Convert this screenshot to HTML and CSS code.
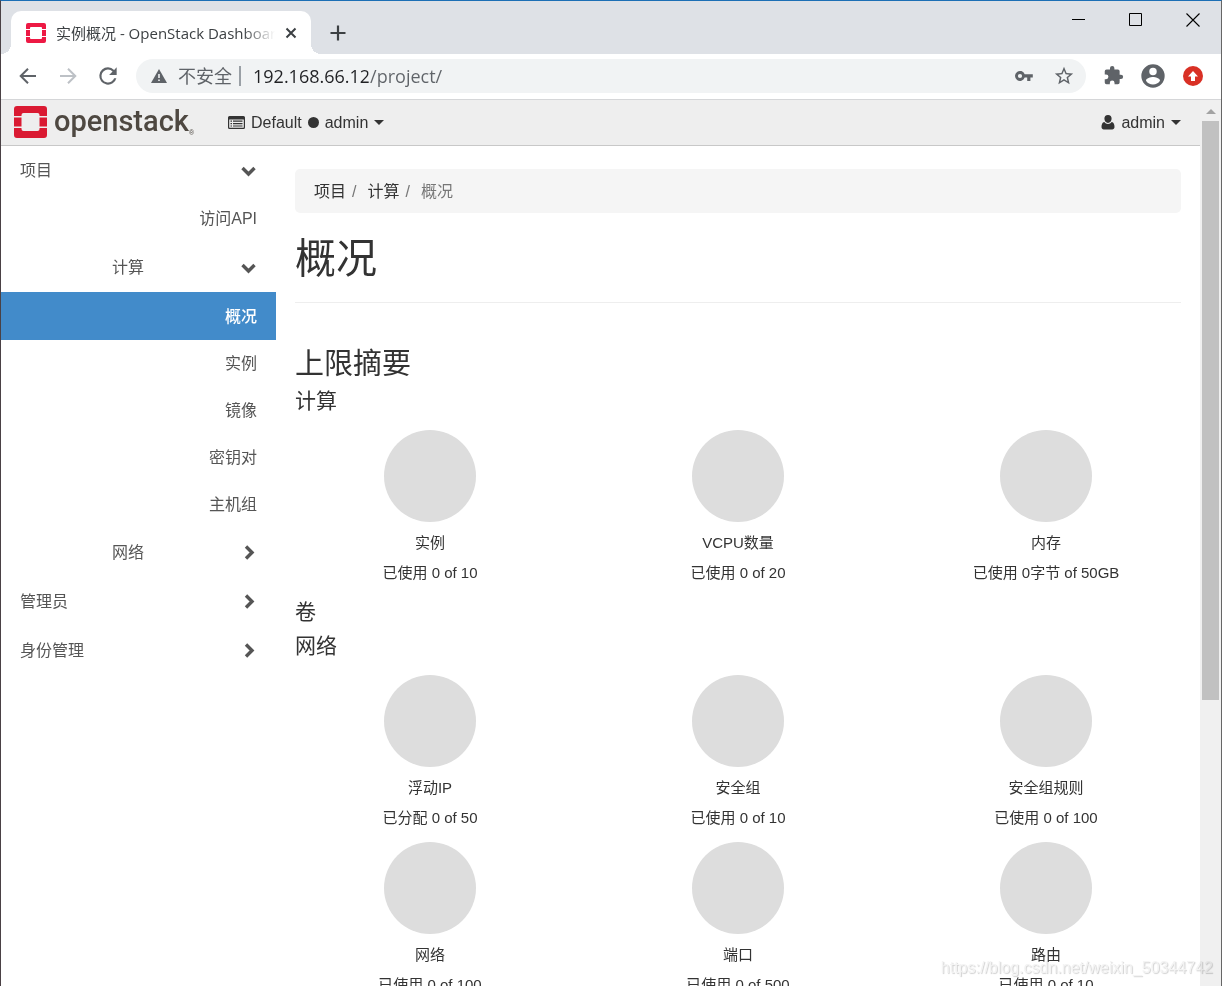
FILE: index.html
```html
<!DOCTYPE html>
<html lang="zh-CN">
<head>
<meta charset="utf-8">
<title>实例概况 - OpenStack Dashboard</title>
<link rel="stylesheet" href="styles.css">
</head>
<body>
<div class="window">
  <div class="tabstrip">
    <div class="tab">
      <svg class="favicon" viewBox="0 0 20 20" aria-hidden="true"><path fill="#ed1944" d="M2 0h16a2 2 0 0 1 2 2v4h-4V5a1 1 0 0 0-1-1H5a1 1 0 0 0-1 1v1H0V2a2 2 0 0 1 2-2zM0 7h4v6H0zM16 7h4v6h-4zM0 14h4v1a1 1 0 0 0 1 1h10a1 1 0 0 0 1-1v-1h4v4a2 2 0 0 1-2 2H2a2 2 0 0 1-2-2z"/></svg>
      <span class="tab-title">实例概况 - OpenStack Dashboard</span>
      <button class="icon-btn tab-close" aria-label="关闭标签页"><svg width="12" height="12" viewBox="0 0 12 12"><path d="M1.500 1.500l9 9M10.500 1.500l-9 9" stroke="#3c4043" stroke-width="2" fill="none"/></svg></button>
    </div>
    <button class="icon-btn new-tab" aria-label="新标签页"><svg width="16" height="16" viewBox="0 0 16 16"><path d="M8 .5v15M.5 8h15" stroke="#3c4043" stroke-width="2.200"/></svg></button>
    <div class="win-controls">
      <button class="icon-btn win-btn" aria-label="最小化"><svg width="14" height="14" viewBox="0 0 14 14"><path d="M0 6.500h13" stroke="#000"/></svg></button>
      <button class="icon-btn win-btn" aria-label="最大化"><svg width="14" height="14" viewBox="0 0 14 14"><path d="M.5 .5h12v12H.5z" stroke="#000" fill="none"/></svg></button>
      <button class="icon-btn win-btn" aria-label="关闭"><svg width="14" height="14" viewBox="0 0 14 14"><path d="M.5 .5l13 13M13.500 .5l-13 13" stroke="#000" stroke-width="1.100"/></svg></button>
    </div>
  </div>

  <div class="toolbar">
    <button class="icon-btn nav-btn" aria-label="后退"><svg width="24" height="24" viewBox="0 0 24 24"><path d="M20 12H5M12 4.700L4.700 12l7.300 7.300" stroke="#5f6368" stroke-width="2" fill="none"/></svg></button>
    <button class="icon-btn nav-btn" aria-label="前进"><svg width="24" height="24" viewBox="0 0 24 24"><path d="M4 12h15M12 4.700l7.300 7.300-7.300 7.300" stroke="#bdc1c6" stroke-width="2" fill="none"/></svg></button>
    <button class="icon-btn nav-btn" aria-label="重新加载"><svg width="26" height="26" viewBox="0 0 24 24"><path fill="#5f6368" d="M17.650 6.350A7.960 7.960 0 0 0 12 4a8 8 0 1 0 7.730 10h-2.080A6 6 0 1 1 12 6c1.660 0 3.140.69 4.220 1.780L13 11h7V4z"/></svg></button>
    <div class="omnibox">
      <svg width="16" height="14" viewBox="0 0 16 14" aria-hidden="true"><path fill="#5f6368" d="M8 0l8 14H0z"/><path fill="#f1f3f4" d="M7.200 5h1.600v4H7.200zM7.200 10.400h1.600V12H7.200z"/></svg>
      <label class="security" for="url">不安全</label>
      <input id="url" class="url" type="text" value="192.168.66.12/project/">
      <button class="icon-btn" aria-label="密码"><svg width="18" height="12" viewBox="0 0 18 12"><path fill="#5f6368" fill-rule="evenodd" d="M9.700 4.200A5 5 0 1 0 9.700 7.600H12.200V11h3.200V7.600H17.800V4.200zM5 3.900a2.100 2.100 0 1 1 0 4.200 2.100 2.100 0 0 1 0-4.200z"/></svg></button>
      <button class="icon-btn star" aria-label="添加书签"><svg width="22" height="22" viewBox="0 0 24 24"><path fill="#5f6368" d="M22 9.240l-7.190-.62L12 2 9.190 8.630 2 9.240l5.460 4.730L5.820 21 12 17.270 18.180 21l-1.630-7.030zM12 15.400l-3.760 2.270 1-4.280-3.320-2.880 4.380-.38L12 6.100l1.710 4.040 4.380.38-3.320 2.880 1 4.280z"/></svg></button>
    </div>
    <button class="icon-btn ext-btn" aria-label="扩展程序"><svg width="21" height="21" viewBox="0 0 24 24"><path fill="#5f6368" d="M20.500 11H19V7a2 2 0 0 0-2-2h-4V3.500a2.500 2.500 0 0 0-5 0V5H4a2 2 0 0 0-2 2v3.800h1.500a2.700 2.700 0 0 1 0 5.400H2V20a2 2 0 0 0 2 2h3.800v-1.500a2.700 2.700 0 0 1 5.400 0V22H17a2 2 0 0 0 2-2v-4h1.500a2.500 2.500 0 0 0 0-5z"/></svg></button>
    <button class="icon-btn ext-btn" aria-label="用户"><svg width="28" height="28" viewBox="0 0 24 24"><path fill="#5f6368" d="M12 2a10 10 0 1 0 0 20 10 10 0 0 0 0-20zm0 3a3.200 3.200 0 1 1 0 6.400A3.200 3.200 0 0 1 12 5zm0 14.200a7.200 7.200 0 0 1-6-3.220c.03-1.990 4-3.080 6-3.080s5.970 1.090 6 3.080a7.200 7.200 0 0 1-6 3.220z"/></svg></button>
    <button class="icon-btn ext-btn" aria-label="更新"><svg width="20" height="20" viewBox="0 0 20 20"><circle cx="10" cy="10" r="10" fill="#d93025"/><path fill="#fff" d="M10 5l5 5.500h-3V15H8v-4.500H5z"/></svg></button>
  </div>

  <div class="viewport">
    <div class="page">
      <header class="topbar">
        <a class="brand" href="#" aria-label="openstack">
          <svg width="33" height="32" viewBox="0 0 33 32" aria-hidden="true"><path fill="#da1a32" d="M3 0h27a3 3 0 0 1 3 3v7h-7.500V9a2 2 0 0 0-2-2h-14a2 2 0 0 0-2 2v1H0V3a3 3 0 0 1 3-3zM0 11.500h7.500v9H0zM25.500 11.500H33v9h-7.500zM0 22h7.500v1a2 2 0 0 0 2 2h14a2 2 0 0 0 2-2v-1H33v7a3 3 0 0 1-3 3H3a3 3 0 0 1-3-3z"/></svg>
          <span class="brand-name">openstack</span><span class="brand-mark">®</span>
        </a>
        <button class="menu-btn">
          <svg width="17" height="14" viewBox="0 0 17 14" aria-hidden="true"><path fill="#333" fill-rule="evenodd" d="M1.500 0h14A1.500 1.500 0 0 1 17 1.500v10a1.500 1.500 0 0 1-1.500 1.500h-14A1.500 1.500 0 0 1 0 11.500v-10A1.500 1.500 0 0 1 1.500 0zM1.200 3.500v8l.3.300h14l.3-.3v-8z"/><path fill="#333" d="M2.500 4.500H4v1.200H2.500zM5 4.500h9.500v1.200H5zM2.500 7H4v1.200H2.500zM5 7h9.500v1.200H5zM2.500 9.400H4v1.200H2.500zM5 9.400h9.500v1.200H5z"/></svg>
          <span>Default</span>
          <span class="dot"></span>
          <span>admin</span>
          <span class="caret"></span>
        </button>
        <button class="menu-btn user-menu">
          <svg width="14" height="15" viewBox="0 0 14 15" aria-hidden="true"><path fill="#333" d="M7 0a3.700 3.700 0 0 1 3.600 3.800C10.600 6 9 8 7 8S3.400 6 3.400 3.800A3.700 3.700 0 0 1 7 0zM3.300 7C4.300 8.300 5.500 9 7 9s2.700-.7 3.700-2C12.800 7.300 13.500 9.500 13.500 12c0 1.500-1 2.500-2.300 2.500H2.800C1.500 14.500.5 13.500.5 12c0-2.500.7-4.700 2.800-5z"/></svg>
          <span>admin</span>
          <span class="caret"></span>
        </button>
      </header>

      <div class="layout">
        <nav class="sidebar">
          <a class="item group" href="#">项目<svg class="chev" viewBox="0 0 16 16"><path d="M1.500 5l6 6 6-6"/></svg></a>
          <a class="item leaf" href="#">访问API</a>
          <a class="item group nested" href="#">计算<svg class="chev" viewBox="0 0 16 16"><path d="M1.500 5l6 6 6-6"/></svg></a>
          <a class="item leaf active" href="#">概况</a>
          <a class="item leaf panel" href="#">实例</a>
          <a class="item leaf panel" href="#">镜像</a>
          <a class="item leaf panel" href="#">密钥对</a>
          <a class="item leaf panel" href="#">主机组</a>
          <a class="item group nested" href="#">网络<svg class="chev" viewBox="0 0 16 16"><path d="M5 1.500l6 6-6 6"/></svg></a>
          <a class="item group" href="#">管理员<svg class="chev" viewBox="0 0 16 16"><path d="M5 1.500l6 6-6 6"/></svg></a>
          <a class="item group" href="#">身份管理<svg class="chev" viewBox="0 0 16 16"><path d="M5 1.500l6 6-6 6"/></svg></a>
        </nav>

        <main class="content">
          <ol class="breadcrumb">
            <li><a href="#">项目</a></li>
            <li><a href="#">计算</a></li>
            <li class="current">概况</li>
          </ol>
          <h1>概况</h1>
          <h2>上限摘要</h2>
          <h3>计算</h3>
          <div class="quotas">
            <div class="quota"><div class="pie"></div><div>实例</div><div class="usage">已使用 0 of 10</div></div>
            <div class="quota"><div class="pie"></div><div>VCPU数量</div><div class="usage">已使用 0 of 20</div></div>
            <div class="quota"><div class="pie"></div><div>内存</div><div class="usage">已使用 0字节 of 50GB</div></div>
          </div>
          <h3>卷</h3>
          <h3>网络</h3>
          <div class="quotas">
            <div class="quota"><div class="pie"></div><div>浮动IP</div><div class="usage">已分配 0 of 50</div></div>
            <div class="quota"><div class="pie"></div><div>安全组</div><div class="usage">已使用 0 of 10</div></div>
            <div class="quota"><div class="pie"></div><div>安全组规则</div><div class="usage">已使用 0 of 100</div></div>
            <div class="quota"><div class="pie"></div><div>网络</div><div class="usage">已使用 0 of 100</div></div>
            <div class="quota"><div class="pie"></div><div>端口</div><div class="usage">已使用 0 of 500</div></div>
            <div class="quota"><div class="pie"></div><div>路由</div><div class="usage">已使用 0 of 10</div></div>
          </div>
        </main>
      </div>
    </div>
    <div class="scrollbar" aria-hidden="true">
      <div class="scroll-up"></div>
      <div class="scroll-thumb"></div>
    </div>
  </div>
  <div class="watermark">https://blog.csdn.net/weixin_50344742</div>
</div>
</body>
</html>
```
FILE: styles.css
```css
* { box-sizing: border-box; }

body {
  margin: 0;
  font: 16px/24px "Liberation Sans", "Noto Sans CJK SC", sans-serif;
  color: #333;
  background: #fff;
}

a { color: inherit; text-decoration: none; }
svg { display: block; flex: none; }

.window {
  position: relative;
  display: flex;
  flex-direction: column;
  height: 100vh;
  overflow: hidden;
  border: 1px solid #4a4145;
  border-top-color: #1c6fb5;
  border-right-color: #666;
  border-bottom: 0;
}

.icon-btn {
  display: flex;
  align-items: center;
  justify-content: center;
  padding: 0;
  border: 0;
  background: none;
}

/* Browser tabs */
.tabstrip {
  display: flex;
  align-items: flex-end;
  flex: none;
  height: 53px;
  padding-left: 10px;
  background: #dee1e6;
}

.tab {
  position: relative;
  display: flex;
  align-items: center;
  width: 300px;
  height: 43px;
  padding: 0 14px 0 15px;
  border-radius: 10px 10px 0 0;
  background: #fff;
}

.tab::before,
.tab::after {
  content: "";
  position: absolute;
  bottom: 0;
  width: 10px;
  height: 10px;
}
.tab::before { right: 100%; background: radial-gradient(circle at 0 0, #dee1e6 10px, #fff 10px); }
.tab::after { left: 100%; background: radial-gradient(circle at 100% 0, #dee1e6 10px, #fff 10px); }

.favicon { width: 20px; height: 20px; margin-right: 10px; }

.tab-title {
  flex: 1;
  overflow: hidden;
  white-space: nowrap;
  font: 15px/24px "Open Sans", "Noto Sans CJK SC", sans-serif;
  color: #3c4043;
  mask-image: linear-gradient(90deg, #000 calc(100% - 32px), transparent);
}

.tab-close { margin-left: 10px; }
.new-tab { width: 34px; height: 43px; margin-left: 10px; }

.win-controls { display: flex; align-self: flex-start; margin-left: auto; }
.win-btn { width: 57px; height: 38px; }

/* Address bar */
.toolbar {
  display: flex;
  align-items: center;
  flex: none;
  height: 46px;
  padding: 0 18px 2px 7px;
  border-bottom: 1px solid #d5d6d8;
  background: #fff;
}

.nav-btn { width: 40px; height: 40px; }

.omnibox {
  display: flex;
  align-items: center;
  flex: 1;
  height: 34px;
  margin: 0 7px 0 8px;
  padding: 0 11px 0 15px;
  border-radius: 17px;
  background: #f1f3f4;
  font: 18px/24px "Open Sans", "Noto Sans CJK SC", sans-serif;
  color: #5f6368;
}

.security {
  margin-left: 11px;
  padding-right: 7px;
  border-right: 2px solid #9aa0a6;
  line-height: 20px;
}

.url {
  flex: 1;
  min-width: 0;
  margin-left: 12px;
  padding: 0;
  border: 0;
  outline: 0;
  font: inherit;
  color: transparent;
  background: linear-gradient(90deg, #202124 115px, #5f6368 115px);
  background-clip: text;
}

.star { margin-left: 20px; }
.ext-btn { width: 40px; }
.ext-btn:last-child { width: 20px; margin-left: 10px; }

/* Page area with its scroll track */
.viewport { display: flex; flex: 1; min-height: 0; }
.page { flex: 1; min-width: 0; overflow: hidden; }

.scrollbar { flex: none; width: 21px; padding: 0 2px; background: #f0f0f0; }
.scroll-up { display: flex; justify-content: center; height: 21px; padding-top: 9px; }
.scroll-up::before {
  content: "";
  width: 0;
  height: 0;
  border: 5px solid transparent;
  border-top: 0;
  border-bottom-color: #a3a3a3;
}
.scroll-thumb { height: 65.4%; background: #c1c1c1; }

/* Dashboard header */
.topbar {
  display: flex;
  align-items: center;
  height: 46px;
  padding: 0 19px 0 13px;
  border-bottom: 1px solid #c8c8c8;
  background: #eee;
}

.brand { display: flex; align-items: center; width: 214px; padding-bottom: 2px; color: #4e4841; }
.brand-name { margin-left: 7px; padding-bottom: 2px; font: 500 29px/34px Roboto, sans-serif; }
.brand-mark { align-self: flex-end; font-size: 7px; line-height: 14px; }

.menu-btn {
  display: flex;
  align-items: center;
  gap: 6px;
  padding: 0;
  border: 0;
  background: none;
  font: inherit;
  color: inherit;
}
.user-menu { margin-left: auto; }
.dot { width: 11px; height: 11px; border-radius: 50%; background: #333; }
.caret { border: 5px solid transparent; border-top-color: #333; border-bottom: 0; }

/* Sidebar */
.layout { display: flex; }
.sidebar { flex: none; width: 275px; color: #555; }

.item {
  display: flex;
  align-items: center;
  justify-content: space-between;
  height: 49px;
  padding: 0 19px;
}
.nested { padding-left: 111px; }
.leaf { justify-content: flex-end; height: 48px; }
.panel { height: 47px; }
.active { padding-top: 1px; background: #428bca; color: #fff; font-weight: 500; }

.chev { width: 16px; height: 16px; }
.chev path { fill: none; stroke: #555; stroke-width: 3.4; }

/* Main column */
.content { flex: 1; min-width: 0; padding: 23px 19px 0; }

.breadcrumb {
  display: flex;
  margin: 0 0 21px;
  padding: 11px 19px 9px;
  border-radius: 5px;
  background: #f5f5f5;
  list-style: none;
}
.breadcrumb li + li::before { content: "/"; padding: 0 11px 0 6px; color: #777; }
.current { color: #777; }

h1, h2, h3 { margin: 0; font-weight: 400; }
h1 {
  margin-bottom: 41px;
  padding-bottom: 18px;
  border-bottom: 1px solid #eee;
  font-size: 41px;
  line-height: 50px;
}
h2 { font-size: 29px; line-height: 40px; }
h3 { font-size: 21px; line-height: 34px; }

.quotas {
  display: grid;
  grid-template-columns: repeat(3, 1fr);
  row-gap: 10px;
  margin: 12px -19px 8px;
  text-align: center;
  font-size: 15px;
  line-height: 30px;
}
.usage { line-height: 29px; }
.pie {
  width: 92px;
  height: 92px;
  margin: 0 auto 6px;
  border-radius: 50%;
  background: #ddd;
}

.watermark {
  position: absolute;
  right: 8px;
  bottom: 6px;
  color: #f4f4f4;
  text-shadow: 1px 1px 1px #d0d0d0;
  mix-blend-mode: multiply;
}
```
